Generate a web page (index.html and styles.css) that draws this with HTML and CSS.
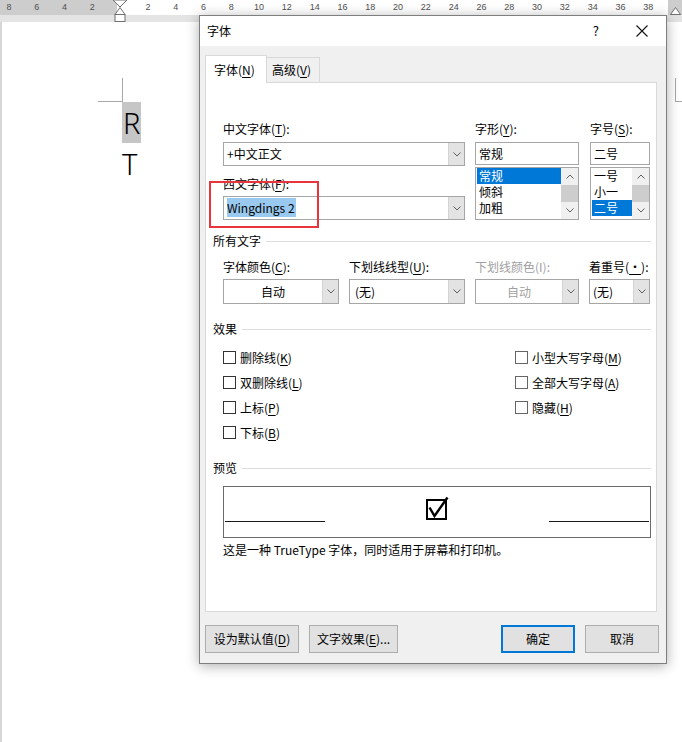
FILE: index.html
```html
<!DOCTYPE html>
<html lang="zh-CN">
<head>
<meta charset="utf-8">
<title>字体</title>
<link rel="stylesheet" href="styles.css">
</head>
<body>
<div class="ruler">
  <div class="ticks">
    <span>8</span><span>6</span><span>4</span><span>2</span>
    <span class="mk"><svg width="16" height="23" viewBox="0 0 16 23"><polygon points="1,0 15,0 8,7" fill="#fff" stroke="#6f6f6f"/><polygon points="8,7.5 3,14.5 13,14.5" fill="#fff" stroke="#6f6f6f"/><rect x="3" y="14.5" width="10" height="7" fill="#fff" stroke="#6f6f6f"/></svg></span>
    <span>2</span><span>4</span><span>6</span><span>8</span><span>10</span><span>12</span><span>14</span><span>16</span><span>18</span><span>20</span><span>22</span><span>24</span><span>26</span><span>28</span><span>30</span><span>32</span><span>34</span><span>36</span><span>38</span>
  </div>
  <svg class="rmark" width="11" height="8" viewBox="0 0 11 8"><polygon points="5.5,0.5 0.5,7.5 10.5,7.5" fill="#fff" stroke="#6f6f6f"/></svg>
</div>
<div class="strip"></div>
<div class="page">
  <div class="marks"><div class="mark-l"></div><div class="mark-r"></div></div>
  <div class="doc">
    <div class="line"><span class="hl">R</span></div>
    <div class="line">T</div>
  </div>
</div>

<div class="dialog">
  <div class="titlebar">
    <span class="title">字体</span>
    <span class="help">?</span>
    <svg class="close" width="12" height="12" viewBox="0 0 12 12"><path d="M0.5 0.5 L11.5 11.5 M11.5 0.5 L0.5 11.5" stroke="#111" stroke-width="1.1" fill="none"/></svg>
  </div>
  <div class="body">
    <div class="tabs">
      <div class="tab active">字体(<u>N</u>)</div>
      <div class="tab">高级(<u>V</u>)</div>
    </div>
    <div class="panel">
      <div class="fontrow">
        <div class="col c1">
          <div class="lbl">中文字体(<u>T</u>):</div>
          <div class="combo"><span class="val">+中文正文</span><span class="btn"><svg width="8" height="5" viewBox="0 0 8 5"><path d="M0.5 0.5 L4 4 L7.5 0.5" fill="none" stroke="#5f5f5f"/></svg></span></div>
          <div class="lbl l2">西文字体(<u>F</u>):</div>
          <div class="combo"><span class="val"><span class="sel">Wingdings 2</span></span><span class="btn"><svg width="8" height="5" viewBox="0 0 8 5"><path d="M0.5 0.5 L4 4 L7.5 0.5" fill="none" stroke="#5f5f5f"/></svg></span></div>
        </div>
        <div class="col c2">
          <div class="lbl">字形(<u>Y</u>):</div>
          <div class="edit">常规</div>
          <div class="list">
            <div class="items"><div class="it on">常规</div><div class="it">倾斜</div><div class="it">加粗</div></div>
            <div class="sb">
              <div class="arr"><svg width="8" height="5" viewBox="0 0 8 5"><path d="M0.5 4.5 L4 1 L7.5 4.5" fill="none" stroke="#5f5f5f"/></svg></div>
              <div class="thumb"></div>
              <div class="arr"><svg width="8" height="5" viewBox="0 0 8 5"><path d="M0.5 0.5 L4 4 L7.5 0.5" fill="none" stroke="#5f5f5f"/></svg></div>
            </div>
          </div>
        </div>
        <div class="col c3">
          <div class="lbl">字号(<u>S</u>):</div>
          <div class="edit">二号</div>
          <div class="list">
            <div class="items"><div class="it">一号</div><div class="it">小一</div><div class="it on">二号</div></div>
            <div class="sb">
              <div class="arr"><svg width="8" height="5" viewBox="0 0 8 5"><path d="M0.5 4.5 L4 1 L7.5 4.5" fill="none" stroke="#5f5f5f"/></svg></div>
              <div class="thumb"></div>
              <div class="arr"><svg width="8" height="5" viewBox="0 0 8 5"><path d="M0.5 0.5 L4 4 L7.5 0.5" fill="none" stroke="#5f5f5f"/></svg></div>
            </div>
          </div>
        </div>
      </div>

      <div class="sec s1">所有文字</div>
      <div class="row2">
        <div class="f f1">
          <div class="lbl">字体颜色(<u>C</u>):</div>
          <div class="combo tall"><span class="val center">自动</span><span class="btn"><svg width="8" height="5" viewBox="0 0 8 5"><path d="M0.5 0.5 L4 4 L7.5 0.5" fill="none" stroke="#5f5f5f"/></svg></span></div>
        </div>
        <div class="f f2">
          <div class="lbl">下划线线型(<u>U</u>):</div>
          <div class="combo tall"><span class="val pad5">(无)</span><span class="btn"><svg width="8" height="5" viewBox="0 0 8 5"><path d="M0.5 0.5 L4 4 L7.5 0.5" fill="none" stroke="#5f5f5f"/></svg></span></div>
        </div>
        <div class="f f3">
          <div class="lbl dis">下划线颜色(I):</div>
          <div class="combo tall"><span class="val center dis">自动</span><span class="btn"><svg width="8" height="5" viewBox="0 0 8 5"><path d="M0.5 0.5 L4 4 L7.5 0.5" fill="none" stroke="#5f5f5f"/></svg></span></div>
        </div>
        <div class="f f4">
          <div class="lbl">着重号(<u>·</u>):</div>
          <div class="combo tall"><span class="val">(无)</span><span class="btn"><svg width="8" height="5" viewBox="0 0 8 5"><path d="M0.5 0.5 L4 4 L7.5 0.5" fill="none" stroke="#5f5f5f"/></svg></span></div>
        </div>
      </div>

      <div class="sec s2">效果</div>
      <div class="effects">
        <div class="cb"><span class="box"></span>删除线(<u>K</u>)</div>
        <div class="cb"><span class="box lt"></span>小型大写字母(<u>M</u>)</div>
        <div class="cb"><span class="box"></span>双删除线(<u>L</u>)</div>
        <div class="cb"><span class="box lt"></span>全部大写字母(<u>A</u>)</div>
        <div class="cb"><span class="box"></span>上标(<u>P</u>)</div>
        <div class="cb"><span class="box lt"></span>隐藏(<u>H</u>)</div>
        <div class="cb"><span class="box"></span>下标(<u>B</u>)</div>
      </div>

      <div class="sec s3">预览</div>
      <div class="preview">
        <div class="pline"></div>
        <svg class="pcheck" width="24" height="26" viewBox="0 0 24 26"><rect x="2" y="4" width="19" height="19" fill="none" stroke="#000" stroke-width="2"/><path d="M4.5 11.5 L9.5 20 L22.5 1.5" fill="none" stroke="#000" stroke-width="2.4"/></svg>
        <div class="pline"></div>
      </div>
      <p class="desc">这是一种 TrueType 字体，同时适用于屏幕和打印机。</p>

      <div class="redbox"></div>
    </div>
    <div class="buttons">
      <div class="button b1">设为默认值(<u>D</u>)</div>
      <div class="button b2">文字效果(<u>E</u>)...</div>
      <div class="spacer"></div>
      <div class="button b3 default">确定</div>
      <div class="button b4">取消</div>
    </div>
  </div>
</div>
</body>
</html>
```
FILE: styles.css
```css
* { box-sizing: border-box; }
html, body { margin: 0; padding: 0; }
body {
  width: 682px;
  height: 742px;
  overflow: hidden;
  position: relative;
  background: #fff;
  font-family: "Noto Sans CJK SC", "Noto Sans", sans-serif;
  font-size: 12px;
  color: #000;
}
u { text-decoration-thickness: 1px; text-underline-offset: 2px; }

/* ruler */
.ruler {
  position: relative;
  z-index: 2;
  height: 15px;
  background: linear-gradient(to right, #cdcdcd 0, #cdcdcd 117px, #fff 117px, #fff 668px, #cdcdcd 668px);
}
.ticks { display: flex; margin-left: -5px; height: 15px; }
.ticks span {
  flex: 0 0 27.8px;
  text-align: center;
  font: 9px/15px "Liberation Sans", sans-serif;
  color: #505050;
}
.ticks .mk { display: flex; justify-content: center; align-items: flex-start; }
.ticks .mk svg { display: block; overflow: visible; }
.rmark { position: absolute; right: 1px; top: 7px; display: block; }
.strip { height: 7px; background: #e4e4e4; }

/* page */
.page { height: 720px; border-left: 2px solid #d6d6d6; background: #fff; }
.marks { display: flex; padding-top: 56px; }
.mark-l { margin-left: 96px; width: 24px; height: 23px; border-right: 1px solid #a8a8a8; border-bottom: 1px solid #a8a8a8; box-sizing: content-box; }
.mark-r { margin-left: auto; width: 6px; height: 23px; border-left: 1px solid #a8a8a8; border-bottom: 1px solid #a8a8a8; box-sizing: content-box; }
.doc { padding-left: 120px; }
.line { height: 41px; line-height: 41px; font-family: "Noto Sans", "Liberation Sans", sans-serif; font-weight: 300; font-size: 29px; color: #000; }
.hl { display: inline-block; height: 41px; background: #c6c6c6; padding: 0 1px; }

/* dialog */
.dialog {
  position: absolute;
  z-index: 5;
  left: 199px;
  top: 15px;
  width: 468px;
  height: 649px;
  border: 1px solid #7e7e7e;
  background: #f0f0f0;
  box-shadow: 0 2px 12px rgba(0, 0, 0, 0.32);
}
.titlebar { height: 30px; background: #fff; display: flex; align-items: center; padding-left: 7px; }
.title { line-height: 16px; }
.help { margin-left: auto; font-size: 13px; line-height: 16px; }
.close { margin-left: 37px; margin-right: 18px; display: block; }

.body { padding: 9px 9px 10px 5px; }
.tabs { display: flex; align-items: flex-end; height: 27px; position: relative; z-index: 1; }
.tab { line-height: 16px; border: 1px solid #d9d9d9; border-bottom: none; }
.tab.active { height: 28px; margin-bottom: -1px; width: 62px; background: #fff; padding: 6px 0 0 8px; }
.tab:not(.active) { height: 25px; width: 53px; background: #f0f0f0; border-left: none; padding: 4px 0 0 5px; }

.panel {
  position: relative;
  height: 530px;
  background: #fff;
  border: 1px solid #d9d9d9;
  padding: 38px 5px 0 7px;
}
.lbl { height: 16px; line-height: 16px; white-space: nowrap; }
.dis { color: #a0a0a0; }

.fontrow { display: flex; margin-left: 10px; }
.c1 { width: 242px; }
.c2 { width: 104px; margin-left: 10px; }
.c3 { width: 60px; margin-left: 11px; }
.c1 .lbl, .c2 .lbl, .c3 .lbl { margin-bottom: 5px; }
.c1 .l2 { margin-top: 10px; margin-bottom: 4px; }

.combo { display: flex; height: 24px; border: 1px solid #a6a6a6; background: #fff; }
.combo.tall { height: 25px; }
.combo .val { flex: 1; padding-left: 3px; line-height: 22px; white-space: nowrap; overflow: hidden; }
.combo.tall .val { line-height: 23px; }
.combo .val.center { text-align: center; padding-left: 0; }
.combo .val.pad5 { padding-left: 5px; }
.combo .btn { width: 16px; background: #e3e3e3; border-left: 1px solid #d4d4d4; display: flex; align-items: center; justify-content: center; }
.combo .btn svg { display: block; }
.sel { background: #99c9ef; padding: 1px 1px 1px 0; }

.edit { height: 23px; border: 1px solid #a6a6a6; line-height: 21px; padding-left: 3px; }
.list { display: flex; height: 53px; margin-top: 2px; border: 1px solid #a6a6a6; }
.items { flex: 1; padding: 0 0 0 1px; }
.it { height: 16px; line-height: 16px; padding-left: 2px; }
.it.on { background: #0078d7; color: #fff; }
.sb { width: 17px; background: #f0f0f0; display: flex; flex-direction: column; }
.arr { height: 17px; display: flex; align-items: center; justify-content: center; }
.arr svg { display: block; }
.thumb { height: 17px; background: #cdcdcd; }

.sec { display: flex; align-items: center; height: 16px; line-height: 16px; }
.sec::after { content: ""; flex: 1; height: 1px; background: #dcdcdc; margin-left: 5px; }
.s1 { margin-top: 13px; }
.s2 { margin-top: 17px; }
.s3 { margin-top: 15px; }

.row2 { display: flex; margin-left: 10px; margin-top: 10px; }
.row2 .lbl { margin-bottom: 4px; }
.f1 { width: 116px; }
.f2 { width: 116px; margin-left: 10px; }
.f3 { width: 104px; margin-left: 10px; }
.f4 { width: 61px; margin-left: 10px; }

.effects { display: grid; grid-template-columns: 292px 1fr; grid-auto-rows: 25px; margin: 8px 0 0 10px; }
.cb { display: flex; align-items: center; line-height: 16px; white-space: nowrap; }
.box { width: 13px; height: 13px; border: 1px solid #333; background: #fff; margin-right: 4px; flex: none; }
.box.lt { border-color: #666; }

.preview {
  margin: 10px 0 0 10px;
  width: 428px;
  height: 52px;
  border: 1px solid #6a6a6a;
  display: flex;
  justify-content: space-between;
  align-items: flex-start;
  padding: 0 1px;
}
.pline { width: 100px; height: 1px; background: #1a1a1a; margin-top: 34px; }
.pcheck { display: block; margin-top: 9px; }
.desc { margin: 4px 0 0 10px; line-height: 16px; }

.redbox {
  position: absolute;
  left: 3px;
  top: 98px;
  width: 110px;
  height: 47px;
  border: 2px solid #e8353b;
}

.buttons { display: flex; margin-top: 13px; margin-right: -2px; height: 28px; }
.button {
  height: 28px;
  background: #e1e1e1;
  border: 1px solid #adadad;
  display: flex;
  align-items: center;
  justify-content: center;
  line-height: 16px;
  white-space: nowrap;
}
.b1 { width: 94px; }
.b2 { width: 89px; margin-left: 10px; }
.spacer { flex: 1; }
.b3 { width: 74px; }
.b4 { width: 74px; margin-left: 10px; }
.button.default { border: 2px solid #0078d7; }
```
